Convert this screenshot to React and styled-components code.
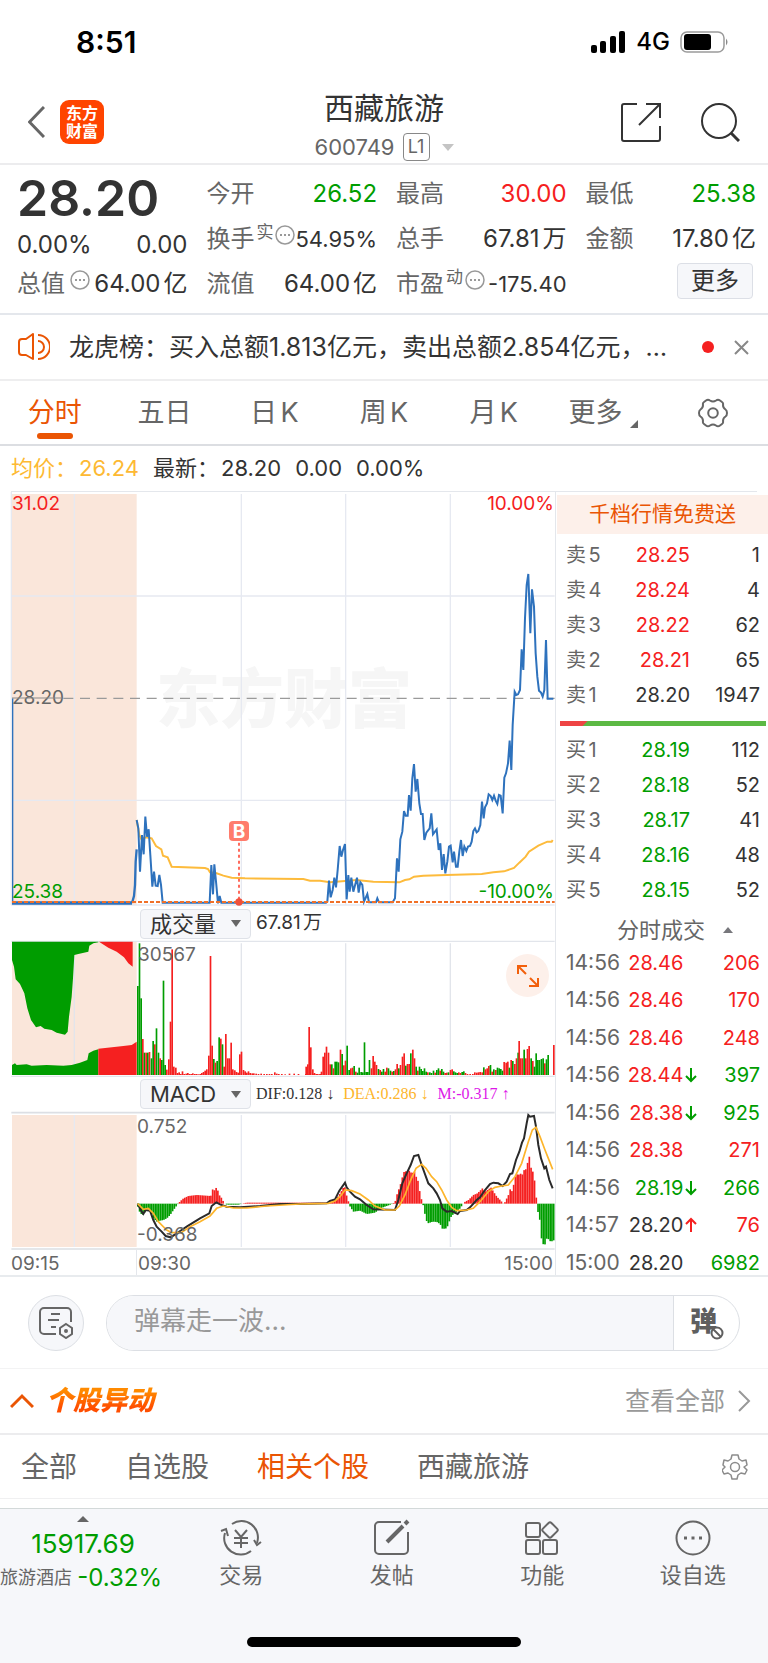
import React from 'react';
import styled, { createGlobalStyle } from 'styled-components';

const RED = '#f52020';
const GREEN = '#009d00';
const ORANGE = '#ea5504';
const INK = '#333333';
const GREY = '#666666';
const LINE = '#e4e7ec';
const tones = { up: RED, down: GREEN, flat: INK };

const GlobalStyle = createGlobalStyle`
  * { box-sizing: border-box; }
  body {
    margin: 0;
    background: #fff;
    color: ${INK};
    font-family: Inter, "Noto Sans CJK SC", sans-serif;
    line-height: 1.2;
    text-autospace: normal;
  }
  button, input, select { font: inherit; color: inherit; margin: 0; padding: 0; border: 0; background: none; }
  button { cursor: pointer; }
  a { color: inherit; text-decoration: none; }
  svg { display: block; flex: none; }
  h1, h2, p, dl, dd { margin: 0; font-weight: 400; }
  table { border-collapse: collapse; }
  td, th { padding: 0; font-weight: 400; text-align: left; }
`;

const StatusBar = styled.div`
  display: flex;
  align-items: center;
  height: 84px;
  padding: 0 38px 0 76px;
  color: #000;
`;
const Clock = styled.time`
  margin-right: auto;
  font-size: 30px;
  font-weight: 600;
`;
const Network = styled.span`
  margin: 0 10px 0 10px;
  font-size: 24px;
  font-weight: 500;
`;

const Header = styled.header`
  display: grid;
  grid-template-columns: 1fr auto 1fr;
  align-items: center;
  height: 81px;
  padding: 0 28px;
  border-bottom: 2px solid #ececee;
`;
const HeaderSide = styled.div`
  display: flex;
  align-items: center;
  gap: 15px;
  padding-bottom: 3px;
`;
const HeaderTools = styled(HeaderSide)`
  justify-content: flex-end;
  gap: 38px;
`;
const AppLogo = styled.span`
  display: flex;
  flex-direction: column;
  justify-content: center;
  width: 44px;
  height: 44px;
  border-radius: 9px;
  background: #ff4400;
  color: #fff;
  font-size: 16px;
  font-weight: 700;
  line-height: 18px;
  text-align: center;
`;
const HeaderTitle = styled.div`
  padding-top: 5px;
  text-align: center;
`;
const StockName = styled.h1`
  margin-bottom: 4px;
  font-size: 30px;
  line-height: 38px;
`;
const StockCode = styled.button`
  display: flex;
  align-items: center;
  gap: 8px;
  color: ${GREY};
  font-size: 22px;
  line-height: 32px;
  i { margin-left: 4px; }
`;
const LevelTag = styled.span`
  width: 27px;
  height: 28px;
  border: 1px solid #888;
  border-radius: 4px;
  font-size: 18px;
  line-height: 26px;
`;
const Triangle = styled.i`
  width: 0;
  height: 0;
  border: ${p => p.$size || 5}px solid transparent;
  ${p => p.$up
    ? `border-top: 0; border-bottom: 6px solid ${p.$color};`
    : `border-bottom: 0; border-top: 7px solid ${p.$color};`}
`;

const Quote = styled.section`
  display: grid;
  grid-template-columns: repeat(4, 1fr);
  column-gap: 19px;
  height: 150px;
  padding: 7px 12px 0 17px;
  border-bottom: 2px solid ${LINE};
`;
const QuoteColumn = styled.dl`
  display: flex;
  flex-direction: column;
`;
const LastPrice = styled.dd`
  height: 56px;
  font-size: 50px;
  font-weight: 600;
  line-height: 52px;
`;
const QuoteRow = styled.div`
  display: flex;
  align-items: center;
  justify-content: space-between;
  height: ${p => p.$h || 45}px;
  font-size: 24px;
  white-space: nowrap;
`;
const QuoteLabel = styled.dt`
  display: flex;
  align-items: center;
  gap: 2px;
  color: ${GREY};
  svg { margin: 0 0 10px 3px; }
`;
const Mark = styled.sup`
  font-size: 17px;
  line-height: 20px;
  margin-bottom: 16px;
  & + svg { margin-left: 0; }
`;
const QuoteValue = styled.dd`
  color: ${p => tones[p.$tone] || INK};
  font-size: ${p => (p.$tight ? 22 : 24)}px;
`;
const MoreButton = styled.button`
  align-self: flex-end;
  width: 76px;
  height: 36px;
  margin: 1px 3px 0 0;
  border: 1px solid #dcdfe6;
  border-radius: 4px;
  background: #f6f7fa;
  font-size: 24px;
  line-height: 34px;
`;

const Notice = styled.section`
  display: flex;
  align-items: center;
  height: 66px;
  padding: 0 19px 0 18px;
  border-bottom: 2px solid #eeeeef;
`;
const NoticeText = styled.p`
  flex: 1;
  min-width: 0;
  margin: 0 12px 0 19px;
  overflow: hidden;
  font-size: 25px;
  line-height: 36px;
  text-overflow: ellipsis;
  white-space: nowrap;
  text-autospace: no-autospace;
`;
const Dot = styled.i`
  width: 12px;
  height: 12px;
  margin-right: 20px;
  border-radius: 50%;
  background: ${RED};
`;

const PeriodTabs = styled.nav`
  display: grid;
  grid-template-columns: repeat(7, 1fr);
  height: 65px;
  border-bottom: 2px solid #dcdee2;
`;
const PeriodTab = styled.button`
  position: relative;
  display: flex;
  align-items: center;
  justify-content: center;
  padding-top: 1px;
  color: ${p => (p.$active ? ORANGE : GREY)};
  font-size: 27px;
  ${p => p.$active && `
    &::after {
      content: "";
      position: absolute;
      bottom: 5px;
      left: 37px;
      width: 36px;
      height: 6px;
      border-radius: 3px;
      background: ${ORANGE};
    }`}
`;
const Corner = styled.i`
  align-self: flex-end;
  margin: 0 0 16px 8px;
  border: 4px solid ${GREY};
  border-top-color: transparent;
  border-left-color: transparent;
`;

const Summary = styled.div`
  display: flex;
  align-items: center;
  gap: 14px;
  height: 46px;
  margin: 0 11px;
  border-bottom: 1px solid ${LINE};
  font-size: 22px;
`;
const Figure = styled.span`
  display: flex;
  gap: 2px;
  color: ${p => p.$color || INK};
`;

const Market = styled.main`
  display: flex;
  padding-left: 11px;
  border-bottom: 2px solid #e8ebee;
`;
const Charts = styled.section`
  flex: 1;
  min-width: 0;
  border-right: 1px solid ${LINE};
`;
const ChartSvg = styled.svg`
  width: 100%;
  height: auto;
  overflow: visible;
  text { font-family: Inter, "Noto Sans CJK SC", sans-serif; }
`;
const IndicatorBar = styled.div`
  display: flex;
  align-items: center;
  gap: 5px;
  height: ${p => p.$h}px;
  padding-left: 129px;
  white-space: nowrap;
`;
const Picker = styled.label`
  position: relative;
  display: flex;
  align-items: center;
  i { position: absolute; right: 10px; pointer-events: none; }
`;
const PickerSelect = styled.select`
  appearance: none;
  width: 111px;
  height: 30px;
  padding: 0 0 0 9px;
  border: 1px solid #dfe2e8;
  border-radius: 4px;
  background: #f6f7fa;
  font-size: 22px;
  line-height: 28px;
`;
const VolumeTotal = styled.span`
  font-size: 19px;
`;
const Legend = styled.span`
  margin-right: 4px;
  color: ${p => p.$color};
  font-family: "Liberation Serif", "DejaVu Sans", serif;
  font-size: 16px;
`;
const VolumePanel = styled.div`
  position: relative;
`;
const ExpandButton = styled.button`
  position: absolute;
  top: 13px;
  right: 6px;
  display: flex;
  align-items: center;
  justify-content: center;
  width: 43px;
  height: 43px;
  border-radius: 50%;
  background: #fdf0ea;
`;
const TimeAxis = styled.div`
  display: flex;
  height: 25px;
  color: ${GREY};
  font-size: 19px;
  line-height: 27px;
`;
const Tick = styled.span`
  padding-right: 2px;
  width: ${p => p.$w || 'auto'};
  ${p => p.$last && 'margin-left: auto;'}
  ${p => p.$rule && `padding-left: 1px; border-left: 1px solid ${LINE};`}
`;

const Side = styled.aside`
  width: 212px;
  padding: 3px 0 0 1px;
`;
const Promo = styled.a`
  display: block;
  height: 39px;
  margin-bottom: 3px;
  background: #fdf0ea;
  color: ${ORANGE};
  font-size: 21px;
  line-height: 37px;
  text-align: center;
`;
const Levels = styled.table`
  width: 100%;
  font-size: 20px;
  tr { height: 35px; }
  th { padding-left: 9px; color: ${GREY}; }
`;
const Cell = styled.td`
  width: ${p => p.$w || 'auto'};
  padding-right: ${p => p.$pr || 0}px;
  color: ${p => tones[p.$tone]};
  text-align: right;
  white-space: nowrap;
`;
const Ratio = styled.div`
  height: 5px;
  margin: 9px 2px 6px 3px;
  background: linear-gradient(135deg, #ee4444 0 19px, #5cb944 20px);
`;
const TradesTitle = styled.button`
  display: flex;
  align-items: center;
  width: 100%;
  height: 44px;
  padding: 2px 0 0 60px;
  gap: 18px;
  color: ${GREY};
  font-size: 22px;
`;
const Trades = styled.table`
  width: 100%;
  font-size: 20px;
  line-height: 24px;
  td, th { padding-bottom: 13px; }
  tr:nth-child(2n) > * { padding-bottom: 14px; }
  tr:last-child > * { padding-bottom: 0; }
  th { width: 71px; padding-left: 9px; color: ${GREY}; font-size: 21px; }
`;
const ArrowCell = styled.td`
  width: 16px;
  svg { margin: 0 1px; }
`;

const CommentBar = styled.form`
  display: flex;
  align-items: center;
  gap: 22px;
  height: 92px;
  padding: 0 28px;
  border-bottom: 1px solid #f3f3f4;
`;
const RoundButton = styled.button`
  display: flex;
  align-items: center;
  justify-content: center;
  width: 56px;
  height: 56px;
  border: 1px solid #dcdfe4;
  border-radius: 50%;
  background: #f6f7fa;
`;
const CommentBox = styled.div`
  display: flex;
  flex: 1;
  height: 56px;
  overflow: hidden;
  border: 1px solid #dcdfe4;
  border-radius: 28px;
`;
const CommentInput = styled.input`
  flex: 1;
  min-width: 0;
  padding: 0 27px 4px;
  background: #f6f7fa;
  font-size: 26px;
  &::placeholder { color: #999; opacity: 1; }
`;
const BarrageToggle = styled.button`
  position: relative;
  width: 66px;
  padding: 0 6px 0 0;
  border-left: 1px solid #dcdfe4;
  color: #5f5f5f;
  font-size: 27px;
  font-weight: 900;
  svg { position: absolute; right: 15px; bottom: 10px; }
`;

const Moves = styled.section`
  display: flex;
  align-items: center;
  height: 66px;
  padding: 0 17px 0 10px;
  border-bottom: 2px solid #ececee;
`;
const MovesTitle = styled.h2`
  margin: 0 auto 0 12px;
  padding-right: 8px;
  background: linear-gradient(#ff8a00 20%, #ff4e00 70%);
  background-clip: text;
  color: transparent;
  font-size: 27px;
  font-style: italic;
  font-weight: 900;
`;
const MovesLink = styled.a`
  display: flex;
  align-items: center;
  gap: 13px;
  color: #999;
  font-size: 25px;
`;
const Filters = styled.nav`
  display: flex;
  align-items: center;
  gap: 48px;
  height: 64px;
  padding: 3px 20px 0 21px;
  border-bottom: 1px solid #f0f0f1;
`;
const Filter = styled.button`
  color: ${p => (p.$active ? ORANGE : GREY)};
  font-size: 28px;
`;
const FilterSettings = styled.button`
  margin-left: auto;
  padding-bottom: 3px;
`;

const Footer = styled.footer`
  margin-top: 9px;
  height: 155px;
  padding-bottom: 16px;
  display: flex;
  flex-direction: column;
  align-items: center;
  justify-content: space-between;
  border-top: 1px solid #d3d9d9;
  background: #f6f7fa;
`;
const FooterNav = styled.nav`
  display: flex;
  width: 100%;
`;
const Index = styled.button`
  display: flex;
  flex-direction: column;
  align-items: center;
  width: 166px;
  padding-top: 7px;
  color: ${GREEN};
  font-size: 24px;
  line-height: 34px;
`;
const IndexValue = styled.span`
  margin-top: 5px;
  font-size: 26px;
`;
const IndexChange = styled.span`
  display: flex;
  align-items: center;
  justify-content: space-between;
  width: 100%;
  padding-right: 4px;
  white-space: nowrap;
  small { color: ${GREY}; font-size: 18px; }
`;
const FooterItem = styled.button`
  display: flex;
  flex: 1;
  flex-direction: column;
  align-items: center;
  gap: 2px;
  padding-top: 10px;
  color: ${GREY};
  font-size: 22px;
  line-height: 32px;
`;
const HomeIndicator = styled.div`
  width: 274px;
  height: 10px;
  border-radius: 5px;
  background: #000;
`;

/* Curves are plotted on a grid three times finer than the chart's own units. */
const price = `410,990 415,1015 420,1145 426,1035 431,1093 436,980 441,1040 446,1018 451,1095 457,1190 462,1145 467,1187 473,1188 478,1155 483,1185 488,1238 629,1238 634,1125 639,1213 643,1123 649,1185 654,1240 659,1218 664,1238
978,1238 982,1235 987,1172 992,1222 998,1200 1003,1163 1008,1192 1013,1140 1019,1068 1024,1100 1029,1080 1035,1062 1040,1228 1045,1155 1049,1205 1054,1163 1060,1205 1071,1163 1076,1208 1081,1177 1087,1185 1092,1235 1102,1212 1107,1237 1128,1237 1132,1225 1137,1237 1178,1237 1185,1225 1191,1105 1196,1145 1201,1048 1207,1025 1212,963 1217,977 1223,977 1227,915 1232,962 1237,865 1242,822 1247,905 1252,867 1258,940 1263,972 1268,972 1273,1050 1279,1028 1289,1015 1294,970 1299,1033 1310,1018 1316,1080 1321,1060 1326,1140 1331,1092 1336,1150 1342,1115 1347,1070 1352,1067 1358,1117 1362,1085 1368,1130 1373,1130 1378,1085 1383,1050 1388,1098 1393,1070 1399,1083 1404,1070 1410,1068 1415,1055 1420,1023 1425,1015 1430,1027 1435,1023 1441,1005 1446,935 1451,985 1455,952 1461,940 1466,913 1472,918 1477,930 1482,917 1487,932 1492,942 1497,915 1502,917 1508,970 1513,863 1518,850 1524,820 1529,752 1534,840 1538,705 1544,605 1549,615 1554,613 1560,600 1565,478 1570,540 1575,385 1580,285 1585,252 1591,430 1596,298 1602,350 1607,490 1612,560 1617,602 1623,608 1628,620 1633,600 1638,450 1643,626 1660,626`;
const average = `410,990 418,1035 424,1047 438,1042 455,1045 468,1068 484,1078 489,1097 503,1102 515,1130 615,1134 624,1137 630,1147 650,1150 670,1157 695,1163 735,1165 900,1167 910,1167 930,1172 960,1172 990,1177 1035,1173 1070,1170 1120,1175 1198,1177 1215,1170 1228,1168 1242,1160 1270,1157 1340,1155 1445,1152 1480,1147 1512,1144 1542,1134 1558,1118 1577,1100 1587,1085 1615,1067 1642,1055 1655,1055 1658,1050`;

const volumes = `413g258 418g130 423g295 428r417 433g458 438r458 443g458 448r456 454g475 459g423 464r433 469g385 475g458 480r475 485g480 490g242 495g495 500r509 506r478 511r365 516r148 521r500 527r503 532r519 537r517 542r522 547r514 552r522 558r521 563r519 568r522 573r522 578r520 584r522 589r522 594r523 600r522 605r519 610r516 615r512 620r508 626r467 631r168 636r437 641g477 646r488 651g483 657g412 662r416 667g433 672r500 677r402 683r475 688r475 693r428 698r508 704r511 709r516 714r518 719r463 724r455 730r510 735r514 740r518 745r514 750r519 756r520 761r520 768r521 775r522 783r521 792r522 800r522 808r522 815r522 824r517 830r521 836r522 845r522 855r523 868r521 882r521 895r522 917r522 927r522 940r523 950r522 960r522
918r500 923r493 927r381 932r442 938r508 943r519 948r522 953r522 960r522 964r515 969r470 974r458 979r440 985r458 990r493 995g493 1000r505 1005g485 1010g485 1015g487 1021r449 1026g462 1031r496 1036r482 1041g437 1047g510 1052r505 1057r503 1062g498 1067r515 1072g518 1077g503 1083g516 1088g517 1093g427 1098g516 1103g516 1108g480 1114r505 1119r468 1124r485 1129r495 1135g507 1140r510 1145g515 1150g507 1155r515 1160r503 1165g505 1171g512 1176r515 1181g513 1186r508 1191r492 1196g505 1201r495 1207r470 1212r460 1217g497 1222r492 1227r492 1232g460 1238r449 1243r475 1248g500 1253r512 1258g500 1263g507 1268g513 1273g505 1278g515 1283r517 1289g517 1294g519 1300g512 1305r518 1310g510 1315g505 1320r512 1325g507 1330g515 1335r519 1340r518 1345g517 1351r510 1356r508 1361g514 1366g517 1371g519 1376r517 1381r519 1386g516 1391g514 1396r519 1402r522 1410r522 1418r522 1424r517 1430r518 1435r517 1440r516 1446r517 1451g502 1456r508 1461r505 1466r498 1471g495 1476r515 1481g508 1487r510 1492g503 1497g505 1502g507 1507g512 1512r486 1518r488 1523r485 1528g503 1533r480 1538g483 1544r492 1549r475 1554g458 1557r423 1562r475 1567r475 1572g449 1577r475 1582r447 1587r438 1593g475 1598r483 1603g500 1608g460 1613g480 1618g480 1624g477 1629g475 1634r490 1639g478 1644g465 1661r435`
  .split(/\s+/)
  .map(s => s.match(/(\d+)([rg])(\d+)/))
  .map(([, x, c, y]) => ({ x: +x, y: +y, color: c === 'r' ? RED : GREEN }));

const histogram = `410,911 413,920 420,940 430,945 440,925 450,930 460,955 470,965 480,962 490,960 500,955 510,945 520,930 534,911 540,904 550,895 565,888 590,885 632,888 637,868 642,872 647,863 652,868 657,885 662,890 667,900 674,911 680,914 715,914 725,911 740,908 980,908 1000,903 1010,895 1020,880 1030,862 1035,862 1040,890 1047,911 1050,920 1060,935 1080,932 1100,942 1125,938 1140,925 1160,918 1178,911 1185,905 1190,885 1196,868 1202,850 1207,830 1212,815 1227,812 1235,820 1243,815 1248,830 1253,840 1258,870 1263,895 1268,910 1273,935 1278,960 1283,970 1298,965 1310,966 1320,972 1327,987 1340,985 1347,965 1353,950 1360,942 1370,935 1380,925 1389,911 1395,905 1405,900 1420,885 1432,880 1447,865 1455,875 1465,868 1472,862 1482,878 1490,890 1500,900 1508,909 1511,915 1515,905 1525,885 1530,868 1537,875 1543,840 1548,822 1555,825 1560,820 1566,825 1572,810 1577,808 1582,790 1587,767 1593,805 1598,815 1603,840 1608,890 1612,920 1614,940 1619,960 1624,1015 1630,1035 1635,1033 1640,1015 1646,1018 1652,1026 1658,1022 1664,1020`
  .split(' ')
  .map(s => s.split(',').map(Number));

function sample(points, x) {
  const i = points.findIndex(p => p[0] >= x);
  if (i <= 0) return points[0][1];
  const [x0, y0] = points[i - 1];
  const [x1, y1] = points[i];
  return y0 + ((y1 - y0) * (x - x0)) / (x1 - x0);
}
const macdBars = Array.from({ length: 240 }, (_, i) => {
  const x = 413 + i * 5.22;
  return { x, y: sample(histogram, Math.min(x, 1663)) };
});

const dif = `413,911 425,935 430,942 437,930 450,932 460,960 470,980 485,995 497,1008 512,1012 530,1000 545,990 560,980 600,955 628,940 635,918 649,907 660,913 680,920 720,922 780,918 840,912 900,912 980,910 990,903 1005,898 1018,872 1035,848 1040,862 1050,875 1065,890 1080,898 1100,915 1120,928 1185,930 1195,900 1207,850 1220,820 1232,795 1242,768 1255,765 1265,795 1285,850 1300,865 1310,880 1320,900 1327,925 1340,935 1355,933 1373,942 1380,933 1400,930 1410,922 1430,900 1440,892 1455,870 1470,852 1480,848 1495,850 1508,858 1520,845 1530,822 1537,820 1548,780 1558,755 1566,728 1572,715 1580,670 1585,645 1590,650 1602,648 1608,680 1615,735 1623,775 1633,805 1638,800 1648,840 1658,865`;
const dea = `413,911 430,928 445,925 460,940 475,965 500,990 515,998 545,997 570,980 600,965 630,948 650,925 670,918 700,924 740,924 800,918 900,912 985,910 1005,903 1020,890 1035,870 1055,872 1080,882 1105,900 1125,918 1155,930 1185,930 1198,918 1215,885 1230,845 1248,805 1265,793 1278,805 1295,830 1310,845 1325,870 1340,900 1355,922 1370,932 1400,930 1420,925 1440,905 1465,875 1485,862 1505,858 1525,855 1545,830 1565,790 1585,725 1597,690 1608,682 1620,710 1635,750 1645,775 1658,808`;

const gridX = [223, 724, 1037, 1351];

function PriceChart() {
  return (
    <ChartSvg viewBox="11 492 544 414" role="img" aria-label="分时走势">
      <text x="156" y="722" fontSize="64" fontWeight="900" fill="#f6f6f6">东方财富</text>
      <g transform="translate(0 490) scale(.33333)" fill="none">
        <rect x="36" y="12" width="374" height="1233" fill="#fae6da" />
        <path d={`M34 6V1245 ${gridX.map(x => `M${x} 12V1245`).join('')} M34 318H1664M34 931H1664M34 1245H1664`} stroke="#e6e9f1" strokeWidth="4" />
        <path d="M190 625H1664" stroke="#9a9a9a" strokeWidth="4" strokeDasharray="30 20" />
        <path d="M38 625V1238" stroke="#2e72bd" strokeWidth="4" />
        <path d="M36 1239H396" stroke="#2e72bd" strokeWidth="10" />
        <path d="M396 1239L402 1218L405 1185L407 1115L410 1078" stroke="#2e72bd" strokeWidth="7" />
        <polyline points={average} stroke="#fdbb3c" strokeWidth="6" />
        <polyline points={price} stroke="#2e72bd" strokeWidth="6" />
        <path d="M36 1236H1664" stroke="#f07028" strokeWidth="6" strokeDasharray="12 6" />
        <path d="M717 1058V1230" stroke="#ff6a5c" strokeWidth="6" strokeDasharray="9 9" />
        <circle cx="717" cy="1236" r="11" fill="#f0503c" />
        <rect x="687" y="993" width="60" height="60" rx="12" fill="#ff7c6c" />
      </g>
      <text x="239" y="838" fontSize="19" fontWeight="700" fill="#fff" textAnchor="middle">B</text>
      <g fontSize="19">
        <text x="12" y="510" fill={RED}>31.02</text>
        <text x="554" y="510" fill={RED} textAnchor="end">10.00%</text>
        <text x="12" y="704" fill={GREY}>28.20</text>
        <path d="M12 698H62" stroke="#8a8a8a" />
        <text x="12" y="898" fill={GREEN}>25.38</text>
        <text x="554" y="898" fill={GREEN} textAnchor="end">-10.00%</text>
      </g>
    </ChartSvg>
  );
}

function VolumeChart() {
  return (
    <ChartSvg viewBox="11 941 544 135" role="img" aria-label="成交量">
      <g transform="translate(0 900) scale(.33333)">
        <rect x="36" y="126" width="374" height="399" fill="#fae6da" />
        <path d={`M34 124H1664M34 529H1664 ${gridX.map(x => `M${x} 130V525`).join('')}`} stroke="#e2e5eb" strokeWidth="4" />
        <path d="M36 125V180L42 200L47 238L60 252L73 280L82 325L93 360L108 382L122 378L133 386L155 390L170 398L195 404L203 395L207 350L215 290L219 235L223 165L235 162L265 155L268 137L280 130L295 127V125Z" fill={GREEN} />
        <path d="M297 125L325 143L350 155L372 172L385 190L398 200V125Z" fill={RED} />
        <path d="M36 525V495L45 490L50 495L80 493L95 497L140 495L190 497L215 495L240 488L262 480L266 460L280 452L295 448V525Z" fill={GREEN} />
        <path d="M295 525V446L370 438L395 435L410 425V525Z" fill={RED} />
        {volumes.map((b, i) => (
          <rect key={i} x={b.x - 2} y={b.y} width="5" height={525 - b.y} fill={b.color} />
        ))}
      </g>
      <text x="138" y="961" fontSize="19" fill={GREY}>30567</text>
    </ChartSvg>
  );
}

function MacdChart() {
  return (
    <ChartSvg viewBox="11 1112 544 138" role="img" aria-label="MACD">
      <g transform="translate(0 900) scale(.33333)" fill="none">
        <rect x="36" y="645" width="374" height="396" fill="#fae6da" />
        <path d={gridX.map(x => `M${x} 645V1041`).join('')} stroke="#e6e9f1" strokeWidth="4" />
        <path d="M34 638H1664M34 1047H1664" stroke="#dcdfe4" strokeWidth="5" />
        {macdBars.map((b, i) => (
          <rect key={i} x={b.x - 2} y={Math.min(911, b.y)} width="5" height={Math.abs(b.y - 911)} fill={b.y < 911 ? RED : GREEN} />
        ))}
        <polyline points={dif} stroke="#2a2a2a" strokeWidth="6" />
        <polyline points={dea} stroke="#fdb52b" strokeWidth="5" />
      </g>
      <g fontSize="19" fill={GREY}>
        <text x="137" y="1133">0.752</text>
        <text x="137" y="1241">-0.368</text>
      </g>
    </ChartSvg>
  );
}

const Info = () => (
  <svg width="20" height="20" viewBox="0 0 20 20" fill="none" stroke="#999">
    <circle cx="10" cy="10" r="9" strokeWidth="1.5" />
    <path d="M5 10h2M9 10h2M13 10h2" strokeWidth="2" />
  </svg>
);

const Flow = ({ up }) => (
  <svg width="14" height="16" viewBox="0 0 14 16" fill="none" stroke={up ? RED : GREEN} strokeWidth="2">
    <path d={up ? 'M7 15V2M2 7l5-5 5 5' : 'M7 1v13M2 9l5 5 5-5'} />
  </svg>
);

const HexGear = () => (
  <svg width="30" height="30" viewBox="0 0 30 30" fill="none" stroke={GREY} strokeWidth="2" strokeLinejoin="round">
    <path d="M8 2.500Q10 1 12 2.500Q15 4.500 18 2.500Q20 1 22 2.500L24 4Q25.500 5 25 7Q25 10 27.500 11.500Q29 12.500 29 15Q29 17.500 27.500 18.500Q25 20 25 23Q25.500 25 24 26L22 27.500Q20 29 18 27.500Q15 25.500 12 27.500Q10 29 8 27.500L6 26Q4.500 25 5 23Q5 20 2.500 18.500Q1 17.500 1 15Q1 12.500 2.500 11.500Q5 10 5 7Q4.500 5 6 4Z" />
    <circle cx="15" cy="15" r="4.8" />
  </svg>
);

const ToothGear = () => (
  <svg width="26" height="28" viewBox="0 0 26 28" fill="none" stroke="#8c8c8c" strokeWidth="1.5" strokeLinejoin="round">
    <path d="M10 2h6l1 4 3 2 4-1 1 5-3 2 3 3-2 4-4-1-3 2-1 4h-5l-1-4-3-2-4 1-2-4 3-3-2-2 1-5 4 1 3-2z" />
    <circle cx="13" cy="14" r="4.5" />
  </svg>
);

const columns = [
  [
    { label: '今开', value: '26.52', tone: 'down' },
    { label: '换手', mark: '实', info: true, value: '54.95%' },
    { label: '流值', value: '64.00亿' },
  ],
  [
    { label: '最高', value: '30.00', tone: 'up' },
    { label: '总手', value: '67.81万' },
    { label: '市盈', mark: '动', info: true, value: '-175.40' },
  ],
  [
    { label: '最低', value: '25.38', tone: 'down' },
    { label: '金额', value: '17.80亿' },
  ],
];

function QuoteItem({ item }) {
  return (
    <QuoteRow>
      <QuoteLabel>
        {item.label}
        {item.mark && <Mark>{item.mark}</Mark>}
        {item.info && <Info />}
      </QuoteLabel>
      <QuoteValue $tone={item.tone} $tight={!!item.mark}>{item.value}</QuoteValue>
    </QuoteRow>
  );
}

const sells = [['卖5', '28.25', '1', 'up'], ['卖4', '28.24', '4', 'up'], ['卖3', '28.22', '62', 'up'], ['卖2', '28.21', '65', 'up'], ['卖1', '28.20', '1947', 'flat']];
const buys = [['买1', '28.19', '112', 'down'], ['买2', '28.18', '52', 'down'], ['买3', '28.17', '41', 'down'], ['买4', '28.16', '48', 'down'], ['买5', '28.15', '52', 'down']];
const trades = [
  ['14:56', '28.46', 'up', '', '206', 'up'],
  ['14:56', '28.46', 'up', '', '170', 'up'],
  ['14:56', '28.46', 'up', '', '248', 'up'],
  ['14:56', '28.44', 'up', 'down', '397', 'down'],
  ['14:56', '28.38', 'up', 'down', '925', 'down'],
  ['14:56', '28.38', 'up', '', '271', 'up'],
  ['14:56', '28.19', 'down', 'down', '266', 'down'],
  ['14:57', '28.20', 'flat', 'up', '76', 'up'],
  ['15:00', '28.20', 'flat', '', '6982', 'down'],
];

function LevelTable({ rows }) {
  return (
    <Levels>
      <tbody>
        {rows.map(([name, value, lots, tone]) => (
          <tr key={name}>
            <th scope="row">{name}</th>
            <Cell $tone={tone}>{value}</Cell>
            <Cell $tone="flat" $w="78px" $pr={8}>{lots}</Cell>
          </tr>
        ))}
      </tbody>
    </Levels>
  );
}

function IndicatorPicker({ name, label }) {
  return (
    <Picker>
      <PickerSelect aria-label={label} defaultValue={name}>
        <option>{name}</option>
      </PickerSelect>
      <Triangle $color={GREY} />
    </Picker>
  );
}

const footerItems = [
  ['交易', <>
    <path d="M12 5a16.500 16.500 0 0 1 25 19M31 32A16.500 16.500 0 0 1 5 14" />
    <path d="M1 12l5-2 2 7M41 23l-4 3-3-5" />
    <path d="M15 11l6 7 6-7M21 18v11M14 19h14M14 24h14" strokeWidth="2" />
  </>],
  ['发帖', <>
    <path d="M30 3H8a4 4 0 0 0-4 4v24a4 4 0 0 0 4 4h25a4 4 0 0 0 4-4V13" />
    <path d="M16 23L32 7M34 5l3-3" strokeWidth="4" />
  </>],
  ['功能', <>
    <rect x="5" y="4" width="14" height="14" rx="2" />
    <rect x="5" y="21" width="14" height="14" rx="2" />
    <rect x="22" y="21" width="14" height="14" rx="2" />
    <rect x="23" y="5" width="12" height="12" rx="2" transform="rotate(45 29 11)" />
  </>],
  ['设自选', <>
    <circle cx="21" cy="19" r="16.5" />
    <path d="M12 19h3M19.500 19h3M27 19h3" strokeWidth="3" />
  </>],
];

export default function App() {
  return (
    <>
      <GlobalStyle />
      <StatusBar>
        <Clock>8:51</Clock>
        <svg width="35" height="22" viewBox="0 0 35 22">
          <rect x="0" y="14" width="6" height="8" rx="2" />
          <rect x="9" y="10" width="6" height="12" rx="2" />
          <rect x="19" y="5" width="6" height="17" rx="2" />
          <rect x="28" y="0" width="6" height="22" rx="2" />
        </svg>
        <Network>4G</Network>
        <svg width="50" height="22" viewBox="0 0 50 22">
          <rect x="1" y="1" width="43" height="20" rx="6" fill="none" stroke="#9b9b9b" strokeWidth="1.500" />
          <rect x="4" y="3" width="27" height="16" rx="3" />
          <path d="M46 7.500q3 3.500 0 7z" fill="#8a8a8a" />
        </svg>
      </StatusBar>

      <Header>
        <HeaderSide>
          <button aria-label="返回">
            <svg width="17" height="32" viewBox="0 0 17 32" fill="none" stroke={GREY} strokeWidth="3">
              <path d="M16 1L1.500 16L16 31" />
            </svg>
          </button>
          <AppLogo><span>东方</span><span>财富</span></AppLogo>
        </HeaderSide>
        <HeaderTitle>
          <StockName>西藏旅游</StockName>
          <StockCode>
            600749
            <LevelTag>L1</LevelTag>
            <Triangle $size={6} $color="#c4c4c4" />
          </StockCode>
        </HeaderTitle>
        <HeaderTools>
          <button aria-label="分享">
            <svg width="42" height="42" viewBox="0 0 42 42" fill="none" stroke={INK} strokeWidth="2">
              <path d="M17 3H4a2 2 0 0 0-2 2v33a2 2 0 0 0 2 2h34a2 2 0 0 0 2-2V25M26 3h14v14M39 4L19 24" />
            </svg>
          </button>
          <button aria-label="搜索">
            <svg width="40" height="40" viewBox="0 0 40 40" fill="none" stroke={INK} strokeWidth="2">
              <circle cx="19" cy="19" r="17" />
              <path d="M31 31l8 8" strokeWidth="3" />
            </svg>
          </button>
        </HeaderTools>
      </Header>

      <Quote>
        <QuoteColumn>
          <LastPrice>28.20</LastPrice>
          <QuoteRow $h={34}>
            <QuoteValue>0.00%</QuoteValue>
            <QuoteValue>0.00</QuoteValue>
          </QuoteRow>
          <QuoteItem item={{ label: '总值', info: true, value: '64.00亿' }} />
        </QuoteColumn>
        {columns.map((items, i) => (
          <QuoteColumn key={i}>
            {items.map(item => <QuoteItem key={item.label} item={item} />)}
            {i === 2 && <MoreButton>更多</MoreButton>}
          </QuoteColumn>
        ))}
      </Quote>

      <Notice>
        <svg width="32" height="28" viewBox="0 0 32 28" fill="none" stroke={ORANGE} strokeWidth="2" strokeLinejoin="round">
          <path d="M15 1v25l-7-4H4a3 3 0 0 1-3-3V9a3 3 0 0 1 3-3h4z" />
          <path d="M20 8a6 6 0 0 1 0 12M20 2a12 12 0 0 1 0 24" />
        </svg>
        <NoticeText>龙虎榜：买入总额1.813亿元，卖出总额2.854亿元，…</NoticeText>
        <Dot />
        <button aria-label="关闭">
          <svg width="15" height="15" viewBox="0 0 15 15" stroke="#888" strokeWidth="2">
            <path d="M1 1l13 13M14 1L1 14" />
          </svg>
        </button>
      </Notice>

      <PeriodTabs>
        <PeriodTab $active>分时</PeriodTab>
        <PeriodTab>五日</PeriodTab>
        <PeriodTab>日K</PeriodTab>
        <PeriodTab>周K</PeriodTab>
        <PeriodTab>月K</PeriodTab>
        <PeriodTab>更多<Corner /></PeriodTab>
        <PeriodTab aria-label="设置"><HexGear /></PeriodTab>
      </PeriodTabs>

      <Summary>
        <Figure $color="#fdb933"><span>均价：</span><span>26.24</span></Figure>
        <Figure><span>最新：</span><span>28.20</span></Figure>
        <Figure>0.00</Figure>
        <Figure>0.00%</Figure>
      </Summary>

      <Market>
        <Charts>
          <PriceChart />
          <IndicatorBar $h={35}>
            <IndicatorPicker name="成交量" label="副图指标一" />
            <VolumeTotal>67.81万</VolumeTotal>
          </IndicatorBar>
          <VolumePanel>
            <VolumeChart />
            <ExpandButton aria-label="放大">
              <svg width="22" height="22" viewBox="0 0 22 22" fill="none" stroke="#f2600c" strokeWidth="2">
                <path d="M1 9V1h9M1 1l8 8M21 13v8h-9M21 21l-8-8" />
              </svg>
            </ExpandButton>
          </VolumePanel>
          <IndicatorBar $h={36}>
            <IndicatorPicker name="MACD" label="副图指标二" />
            <Legend $color={INK}>DIF:0.128 ↓</Legend>
            <Legend $color="#fdb52b">DEA:0.286 ↓</Legend>
            <Legend $color="#dd18e8">M:-0.317 ↑</Legend>
          </IndicatorBar>
          <MacdChart />
          <TimeAxis>
            <Tick $w="125px">09:15</Tick>
            <Tick $rule>09:30</Tick>
            <Tick $last>15:00</Tick>
          </TimeAxis>
        </Charts>

        <Side>
          <Promo href="#depth">千档行情免费送</Promo>
          <LevelTable rows={sells} />
          <Ratio />
          <LevelTable rows={buys} />
          <TradesTitle>分时成交<Triangle $up $color="#77777c" /></TradesTitle>
          <Trades>
            <tbody>
              {trades.map(([time, value, tone, flow, lots, lotsTone], i) => (
                <tr key={i}>
                  <th scope="row">{time}</th>
                  <Cell $tone={tone}>{value}</Cell>
                  <ArrowCell>{flow && <Flow up={flow === 'up'} />}</ArrowCell>
                  <Cell $tone={lotsTone} $w="69px" $pr={8}>{lots}</Cell>
                </tr>
              ))}
            </tbody>
          </Trades>
        </Side>
      </Market>

      <CommentBar onSubmit={e => e.preventDefault()}>
        <RoundButton type="button" aria-label="弹幕设置">
          <svg width="34" height="32" viewBox="0 0 34 32" fill="none" stroke={GREY} strokeWidth="2">
            <path d="M32 15V5a4 4 0 0 0-4-4H5a4 4 0 0 0-4 4v18a4 4 0 0 0 4 4h12M12 7h9M9 13h11M12 20h5" />
            <path d="M27 17l6 4v6l-6 4-6-4v-6z" />
            <circle cx="27" cy="24" r="1" />
          </svg>
        </RoundButton>
        <CommentBox>
          <CommentInput aria-label="弹幕" placeholder="弹幕走一波..." />
          <BarrageToggle type="button">
            弹
            <svg width="14" height="14" viewBox="0 0 14 14" fill="#fff" stroke="#5f5f5f" strokeWidth="2">
              <circle cx="7" cy="7" r="5.500" />
              <path d="M3 3l8 8" />
            </svg>
          </BarrageToggle>
        </CommentBox>
      </CommentBar>

      <Moves>
        <svg width="24" height="16" viewBox="0 0 24 16" fill="none" stroke={ORANGE} strokeWidth="3">
          <path d="M1 14L12 3l11 11" />
        </svg>
        <MovesTitle>个股异动</MovesTitle>
        <MovesLink href="#moves">
          查看全部
          <svg width="13" height="22" viewBox="0 0 13 22" fill="none" stroke="#999" strokeWidth="2">
            <path d="M1 1l10 10L1 21" />
          </svg>
        </MovesLink>
      </Moves>

      <Filters>
        <Filter>全部</Filter>
        <Filter>自选股</Filter>
        <Filter $active>相关个股</Filter>
        <Filter>西藏旅游</Filter>
        <FilterSettings aria-label="异动设置"><ToothGear /></FilterSettings>
      </Filters>

      <Footer>
        <FooterNav>
          <Index>
            <Triangle $up $size={6} $color={GREY} />
            <IndexValue>15917.69</IndexValue>
            <IndexChange><small>旅游酒店</small>-0.32%</IndexChange>
          </Index>
          {footerItems.map(([label, icon]) => (
            <FooterItem key={label}>
              <svg width="42" height="38" viewBox="0 0 42 38" fill="none" stroke={GREY} strokeWidth="2">{icon}</svg>
              {label}
            </FooterItem>
          ))}
        </FooterNav>
        <HomeIndicator />
      </Footer>
    </>
  );
}
